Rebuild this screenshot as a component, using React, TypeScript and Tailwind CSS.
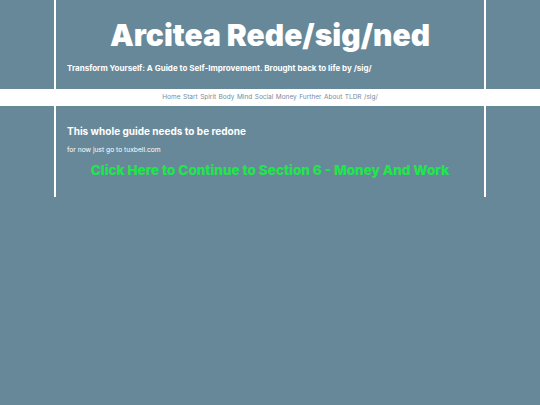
const navItems = ["Home", "Start", "Spirit", "Body", "Mind", "Social", "Money", "Further", "About", "TLDR", "/sig/"];

const App = () => {
  return (
    <div className="min-h-[405px] bg-[#678899] font-['Inter',sans-serif]">
      <header className="mx-auto w-4/5 border-x-2 border-white h-[89px] pt-[17px]">
        <h1 className="text-center text-[30px] leading-[36px] font-black text-white">
          Arcitea Rede/sig/ned
        </h1>
        <p className="mt-[9px] pl-[11px] text-[8px] leading-[12px] font-bold text-white">
          Transform Yourself: A Guide to Self-Improvement. Brought back to life by /sig/
        </p>
      </header>

      <nav className="h-[17px] bg-white flex items-center justify-center gap-[2.5px] text-[6.5px] text-[#7a8b9a]">
        {navItems.map((item) => (
          <span key={item} className="cursor-pointer">
            {item}
          </span>
        ))}
      </nav>

      <main className="mx-auto w-4/5 border-x-2 border-white h-[91px] pt-[17px] pl-[11px]">
        <h2 className="text-[10px] leading-[16px] font-bold text-white">
          This whole guide needs to be redone
        </h2>
        <p className="mt-[6px] text-[6.7px] leading-[10px] text-white">for now just go to tuxbell.com</p>
        <a
          href="#"
          className="mt-[6px] block text-center pr-[11px] text-[13.5px] leading-[18px] font-extrabold text-[#1fe64a]"
        >
          Click Here to Continue to Section 6 - Money And Work
        </a>
      </main>
    </div>
  );
};

export default App;
